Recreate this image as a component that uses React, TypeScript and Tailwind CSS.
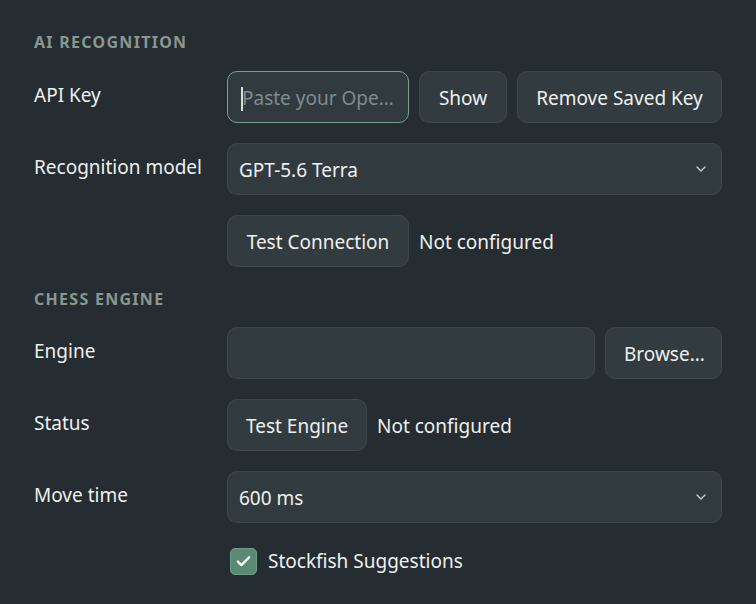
import { Check, ChevronDown } from 'lucide-react'

const btn = 'h-[52px] shrink-0 rounded-[10px] border border-[#3f484d] bg-[#323b40] px-[18px] pt-[3px] text-[19px] text-[#eef0ee] whitespace-nowrap'

function Header({ children }: { children: React.ReactNode }) {
  return <div className="text-[16px] font-bold uppercase leading-5 tracking-[0.08em] text-[#8a978f]">{children}</div>
}

function Label({ children }: { children: React.ReactNode }) {
  return <div className="flex h-[52px] items-center pb-[3px] text-[19px] text-[#eef0ee]">{children}</div>
}

function Select({ value }: { value: string }) {
  return (
    <div className="flex h-[52px] items-center justify-between rounded-[10px] border border-[#3f484d] bg-[#313a3f] pl-[11px] pr-[12px] text-[19px] text-[#eef0ee]">
      <span className="pt-[3px]">{value}</span>
      <ChevronDown className="h-[16px] w-[16px] text-[#c8cfcc]" strokeWidth={2} />
    </div>
  )
}

export default function App() {
  return (
    <div className="h-[604px] w-[756px] bg-[#252c32] px-[34px] pt-[31px] font-['Noto_Sans','Open_Sans',sans-serif]">
      <div className="grid grid-cols-[193px_1fr] gap-y-[20px]">
        <div className="col-span-2 -mb-[1px] pt-[1px]">
          <Header>AI Recognition</Header>
        </div>

        <Label>API Key</Label>
        <div className="flex gap-[10px]">
          <div className="relative flex h-[52px] w-[182px] shrink-0 items-center rounded-[10px] border border-[#79a08f] bg-[#313a3f] pl-[14px] pr-[10px]">
            <span className="absolute left-[13px] top-[15px] h-[24px] w-[1.5px] bg-[#d8dedb]" />
            <span className="truncate pt-[3px] text-[19px] text-[#7f8b90]">Paste your OpenAI API key</span>
          </div>
          <button className={`${btn} w-[88px]`}>Show</button>
          <button className={`${btn} flex-1`}>Remove Saved Key</button>
        </div>

        <Label>Recognition model</Label>
        <Select value="GPT-5.6 Terra" />

        <div />
        <div className="flex items-center gap-[10px]">
          <button className={`${btn} w-[182px]`}>Test Connection</button>
          <span className="pt-[3px] text-[19px] text-[#eef0ee]">Not configured</span>
        </div>

        <div className="col-span-2 -mb-[2px] pt-[2px]">
          <Header>Chess Engine</Header>
        </div>

        <Label>Engine</Label>
        <div className="flex gap-[10px]">
          <div className="h-[52px] flex-1 rounded-[10px] border border-[#3f484d] bg-[#313a3f]" />
          <button className={`${btn} w-[117px] px-0`}>Browse...</button>
        </div>

        <Label>Status</Label>
        <div className="flex items-center gap-[10px]">
          <button className={`${btn} w-[140px] px-0`}>Test Engine</button>
          <span className="pt-[3px] text-[19px] text-[#eef0ee]">Not configured</span>
        </div>

        <Label>Move time</Label>
        <Select value="600 ms" />

        <div />
        <label className="mt-[4px] flex items-center gap-[11px] pl-[3px] text-[19px] text-[#eef0ee]">
          <span className="flex h-[27px] w-[27px] items-center justify-center rounded-[5px] border border-[#6f9c88] bg-[#5a8a74]">
            <Check className="h-[17px] w-[17px] text-white" strokeWidth={3.4} />
          </span>
          Stockfish Suggestions
        </label>
      </div>
    </div>
  )
}
